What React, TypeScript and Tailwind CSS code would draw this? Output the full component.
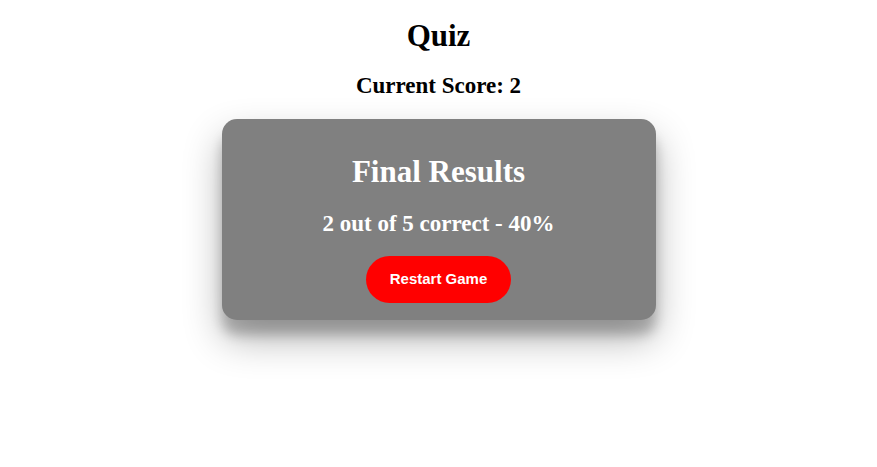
import React from "react";

const App = () => {
  const score = 2;
  const total = 5;
  return (
    <div className="min-h-screen bg-white text-center font-['Liberation_Serif',serif] text-black">
      <h1 className="pt-[17px] text-[31px] font-bold leading-[37px]">Quiz</h1>
      <h2 className="mt-[19px] text-[23px] font-bold leading-[26px]">
        Current Score: {score}
      </h2>

      <div className="mx-auto mt-[20px] flex w-[434px] flex-col items-center rounded-[15px] bg-[#808080] px-6 pb-[17px] pt-[34px] text-white shadow-[0_19px_38px_rgba(0,0,0,0.3),0_15px_12px_rgba(0,0,0,0.22)]">
        <h1 className="text-[31px] font-bold leading-[37px]">Final Results</h1>
        <h2 className="mt-[21px] text-[23px] font-bold leading-[26px]">
          {score} out of {total} correct - {(score / total) * 100}%
        </h2>
        <button className="mt-[19px] h-[47px] rounded-full bg-[#ff0000] px-[24px] font-['Liberation_Sans',Arial,sans-serif] text-[15px] font-bold text-white">
          Restart Game
        </button>
      </div>
    </div>
  );
};

export default App;
